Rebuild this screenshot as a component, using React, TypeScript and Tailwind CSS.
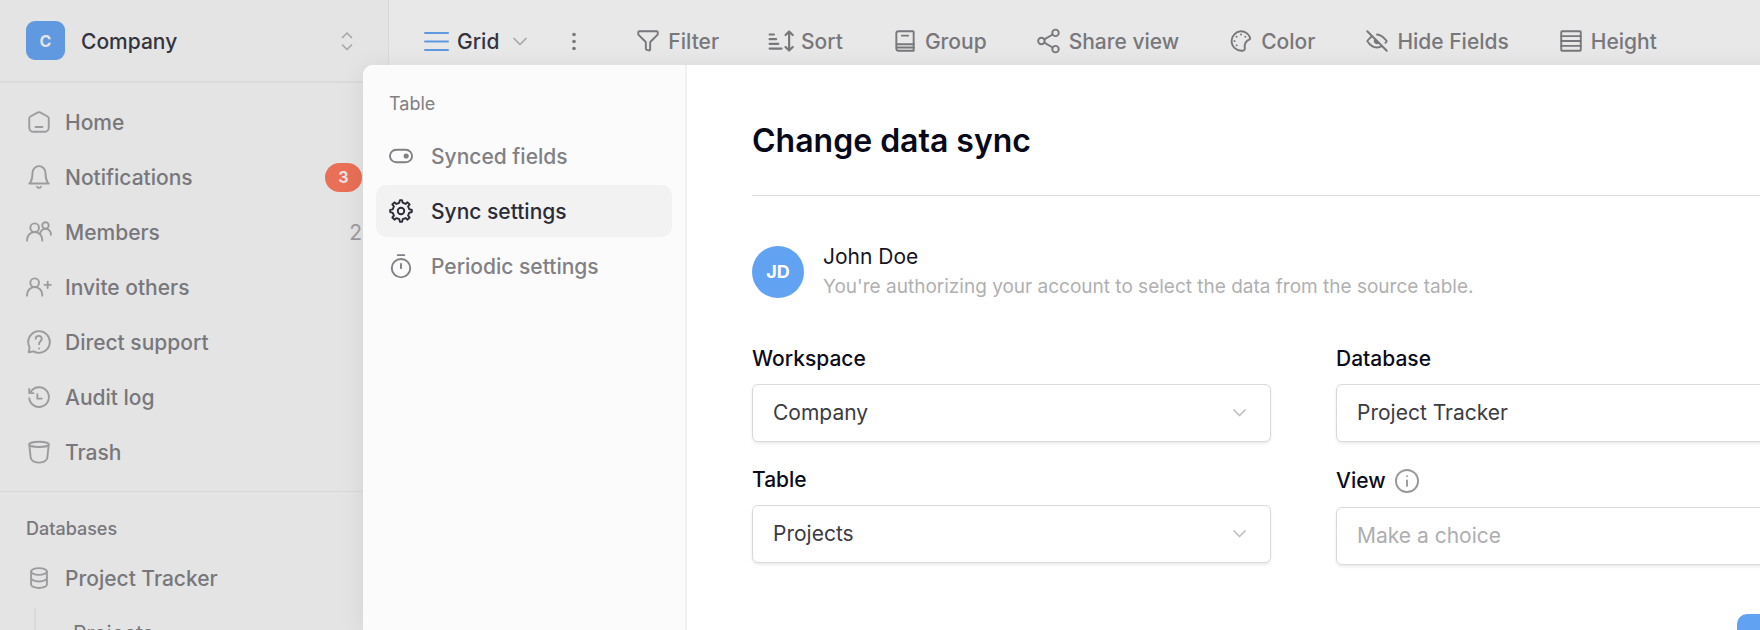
import type { ReactNode } from "react";

type IconProps = { children: ReactNode; className?: string };

function Icon({ children, className = "" }: IconProps) {
  return (
    <svg
      viewBox="0 0 24 24"
      fill="none"
      stroke="currentColor"
      strokeWidth="1.75"
      strokeLinecap="round"
      strokeLinejoin="round"
      aria-hidden="true"
      className={`size-[26px] shrink-0 ${className}`}
    >
      {children}
    </svg>
  );
}

const icons = {
  home: (
    <>
      <path d="M8.8 16.6h6.4" />
      <path d="M21 8.7v8.3a4 4 0 0 1-4 4H7a4 4 0 0 1-4-4V8.7a2 2 0 0 1 1.05-1.76l7-3.8a2 2 0 0 1 1.9 0l7 3.8A2 2 0 0 1 21 8.7z" />
    </>
  ),
  bell: (
    <>
      <path d="M18 8.4c0-1.697-.632-3.325-1.757-4.525C15.117 2.675 13.59 2 12 2c-1.591 0-3.117.674-4.243 1.875C6.632 5.075 6 6.703 6 8.4 6 15.867 3 18 3 18h18s-3-2.133-3-9.6z" />
      <path d="M13.73 21a2 2 0 0 1-3.46 0" />
    </>
  ),
  members: (
    <>
      <path d="M1 20v-1a7 7 0 0 1 14 0v1" />
      <path d="M13 14a5 5 0 0 1 10 0v.5" />
      <circle cx="8" cy="8" r="4" />
      <circle cx="18" cy="6" r="3" />
    </>
  ),
  invite: (
    <>
      <path d="M17 10h6M20 7v6" />
      <path d="M1 20v-1a7 7 0 0 1 14 0v1" />
      <circle cx="8" cy="8" r="4" />
    </>
  ),
  support: (
    <>
      <path d="M9 9c0-3.5 5.5-3.5 5.5 0 0 2.5-2.5 2-2.5 5M12 18.01l.01-.011" />
      <path d="M12 22c5.523 0 10-4.477 10-10S17.523 2 12 2 2 6.477 2 12c0 1.821.487 3.53 1.338 5L2.5 21.5l4.5-.838A9.955 9.955 0 0 0 12 22z" />
    </>
  ),
  audit: (
    <>
      <path d="M10.5 9.5v4h4" />
      <path d="M3 13.2A9.1 9.1 0 1 0 4.6 6.8L3.4 8.2" />
      <path d="M3 4.5v3.9h3.9" />
    </>
  ),
  trash: (
    <>
      <ellipse cx="12" cy="5" rx="9" ry="2.4" />
      <path d="M3 5l1.3 12.2c.2 1.6 1.1 2.8 2.6 3.4 3.2 1.5 7 1.5 10.2 0 1.5-.6 2.4-1.8 2.6-3.4L21 5" />
    </>
  ),
  database: (
    <>
      <ellipse cx="12" cy="6" rx="7.3" ry="3.1" />
      <path d="M4.7 6v12c0 1.8 3.2 3.2 7.3 3.2s7.3-1.4 7.3-3.2V6" />
      <path d="M4.7 12c0 1.8 3.2 3.2 7.3 3.2s7.3-1.4 7.3-3.2" />
    </>
  ),
  filter: (
    <path d="M4 3h16a1 1 0 0 1 1 1v1.586a1 1 0 0 1-.293.707l-6.414 6.414a1 1 0 0 0-.293.707v6.305a1 1 0 0 1-1.243.97l-2-.5a1 1 0 0 1-.757-.97v-5.805a1 1 0 0 0-.293-.707L3.293 6.293A1 1 0 0 1 3 5.586V4a1 1 0 0 1 1-1z" />
  ),
  sort: (
    <>
      <path d="M1.5 6h4M1.5 10.3h6M1.5 14.6h8M1.5 19h11" strokeWidth="2" />
      <path d="M19.5 4v16M16.2 6.5l3.3-3.3 3.3 3.3M16.2 17.5l3.3 3.3 3.3-3.3" strokeWidth="2" />
    </>
  ),
  group: (
    <>
      <path d="M4 19V5a2 2 0 0 1 2-2h13.4a.6.6 0 0 1 .6.6V21H6a2 2 0 0 1-2-2z" />
      <path d="M9 7h6M4.5 15H20M4.5 18H20" />
    </>
  ),
  share: (
    <>
      <circle cx="18" cy="4.5" r="3" />
      <circle cx="18" cy="19.5" r="3" />
      <circle cx="5" cy="12" r="3" />
      <path d="M7.6 10.5l7.8-4.5M7.6 13.5l7.8 4.5" />
    </>
  ),
  palette: (
    <>
      <path d="M20.51 9.54a1.899 1.899 0 0 1-1 1.09A7 7 0 0 0 15.37 17c.001.47.048.939.14 1.4a2.16 2.16 0 0 1-.31 1.65 1.79 1.79 0 0 1-1.21.8 9 9 0 0 1-10.62-9.13 9.05 9.05 0 0 1 8.27-8.68H12a9 9 0 0 1 8.51 6.5z" />
      <path d="M8 16.01l.01-.011M6 12.01l.01-.011M8 8.01l.01-.011M12 6.01l.01-.011M16 8.01l.01-.011" />
    </>
  ),
  hide: (
    <>
      <path d="M3 3l18 18" />
      <path d="M10.5 10.68a2 2 0 0 0 2.82 2.82z" fill="currentColor" />
      <path d="M7.36 7.56C5.68 8.74 4.28 10.42 3 12c1.89 2.99 5.13 6 9 6 1.55 0 3.04-.49 4.4-1.26M12 6c4.01 0 6.7 3.16 9 6-.35.56-.75 1.12-1.2 1.65" />
    </>
  ),
  height: (
    <>
      <rect x="3" y="3" width="18" height="18" rx=".8" />
      <path d="M3 7.5h18M3 12h18M3 16.5h18" />
    </>
  ),
  toggle: (
    <>
      <rect x="1.8" y="6.2" width="20.4" height="11.6" rx="5.8" />
      <circle cx="16.8" cy="12" r="1.5" fill="currentColor" />
    </>
  ),
  settings: (
    <>
      <circle cx="12" cy="12" r="3" />
      <path d="M19.622 10.395l-1.097-2.65L20 6l-2-2-1.735 1.483-2.707-1.113L12.935 2h-1.954l-.632 2.401-2.645 1.115L6 4 4 6l1.453 1.789-1.08 2.657L2 11v2l2.401.655L5.516 16.3 4 18l2 2 1.791-1.46 2.606 1.072L11 22h2l.604-2.387 2.651-1.098L18 20l2-2-1.484-1.75 1.098-2.652 2.386-.62V11z" />
    </>
  ),
  timer: (
    <>
      <path d="M9 2h6M12 10v4" />
      <circle cx="12" cy="14" r="8.5" />
    </>
  ),
  info: (
    <>
      <circle cx="12" cy="12" r="10.2" />
      <path d="M12 11.5v5M12 7.51l.01-.011" />
    </>
  ),
};

type IconName = keyof typeof icons;

const navItems: { label: string; icon: IconName; badge?: string; count?: string }[] = [
  { label: "Home", icon: "home" },
  { label: "Notifications", icon: "bell", badge: "3" },
  { label: "Members", icon: "members", count: "2" },
  { label: "Invite others", icon: "invite" },
  { label: "Direct support", icon: "support" },
  { label: "Audit log", icon: "audit" },
  { label: "Trash", icon: "trash" },
];

const tools: { label: string; icon: IconName }[] = [
  { label: "Filter", icon: "filter" },
  { label: "Sort", icon: "sort" },
  { label: "Group", icon: "group" },
  { label: "Share view", icon: "share" },
  { label: "Color", icon: "palette" },
  { label: "Hide Fields", icon: "hide" },
  { label: "Height", icon: "height" },
];

const settingsItems: { label: string; icon: IconName; active?: boolean }[] = [
  { label: "Synced fields", icon: "toggle" },
  { label: "Sync settings", icon: "settings", active: true },
  { label: "Periodic settings", icon: "timer" },
];

function Sidebar() {
  return (
    <aside className="flex w-[389px] shrink-0 flex-col border-r border-[#dadada] bg-[#e4e4e4] text-[#77777c]">
      <button
        type="button"
        className="flex h-[83px] shrink-0 items-center border-b-2 border-[#dbdbdb] pr-7 pl-[26px] text-left"
      >
        <span className="flex size-[39px] items-center justify-center rounded-[9px] bg-[#6099e0] text-base font-bold text-[#e4e4e4]">
          C
        </span>
        <span className="ml-4 flex-1 pt-0.5 font-medium text-[#33343e]">Company</span>
        <svg
          viewBox="0 0 26 26"
          className="size-[26px] text-[#a8a8aa]"
          fill="none"
          stroke="currentColor"
          strokeWidth="1.75"
          strokeLinecap="round"
          strokeLinejoin="round"
          aria-hidden="true"
        >
          <path d="M8.5 9.5L13 5l4.5 4.5M8.5 17l4.5 4.5L17.5 17" />
        </svg>
      </button>
      <nav className="flex flex-col gap-[3px] border-b border-[#d9d9d9] py-[13px]">
        {navItems.map((item) => (
          <a key={item.label} href="#" className="flex h-[52px] items-center gap-[13px] px-[26px]">
            <Icon className="text-[#9c9c9f]">{icons[item.icon]}</Icon>
            <span className="flex-1 pt-0.5 font-medium">{item.label}</span>
            {item.badge && (
              <span className="flex h-[29px] w-[37px] items-center justify-center rounded-full bg-[#e96f57] text-base font-bold text-[#e8e4e4]">
                {item.badge}
              </span>
            )}
            {item.count && <span className="pt-0.5 text-[#9c9c9f]">{item.count}</span>}
          </a>
        ))}
      </nav>
      <h2 className="px-[26px] pt-[25px] text-lg leading-6 font-medium">Databases</h2>
      <a href="#" className="mt-[11px] flex h-[52px] shrink-0 items-center gap-[13px] px-[26px]">
        <Icon className="text-[#9c9c9f]">{icons.database}</Icon>
        <span className="pt-0.5 font-medium">Project Tracker</span>
      </a>
      <ul className="mt-1 ml-[34px] border-l-2 border-[#d9d9d9]">
        <li>
          <a href="#" className="flex h-[52px] items-center pl-[37px]">
            Projects
          </a>
        </li>
      </ul>
    </aside>
  );
}

function Toolbar() {
  return (
    <header className="flex h-[81px] items-center pl-[34px] font-medium whitespace-nowrap text-[#77777c]">
      <button type="button" className="flex items-center text-[#33343e]">
        <svg
          viewBox="0 0 26 26"
          className="size-[26px] shrink-0 text-[#6099e0]"
          fill="none"
          stroke="currentColor"
          strokeWidth="2"
          strokeLinecap="round"
          aria-hidden="true"
        >
          <path d="M2 5h23M2 13.5h23M2 22h23" />
        </svg>
        <span className="ml-2 pt-0.5">Grid</span>
        <svg
          viewBox="0 0 26 26"
          className="ml-2 size-[26px] text-[#a8a8aa]"
          fill="none"
          stroke="currentColor"
          strokeWidth="1.75"
          strokeLinecap="round"
          strokeLinejoin="round"
          aria-hidden="true"
        >
          <path d="M7 10.5l6 6 6-6" />
        </svg>
      </button>
      <button type="button" aria-label="View options" className="ml-7">
        <svg viewBox="0 0 26 26" className="size-[26px]" fill="currentColor" aria-hidden="true">
          <circle cx="13" cy="6.500" r="1.800" />
          <circle cx="13" cy="13.500" r="1.800" />
          <circle cx="13" cy="20.500" r="1.800" />
        </svg>
      </button>
      <div className="ml-12 flex gap-[49px]">
        {tools.map((tool) => (
          <button key={tool.label} type="button" className="flex items-center gap-[7px]">
            <Icon>{icons[tool.icon]}</Icon>
            <span className="pt-0.5">{tool.label}</span>
          </button>
        ))}
      </div>
    </header>
  );
}

type FieldProps = { id: string; label: string; value: string; placeholder?: boolean; info?: boolean };

function SelectField({ id, label, value, placeholder, info }: FieldProps) {
  return (
    <div className="flex flex-col gap-[13px]">
      <div className="flex items-center gap-2">
        <label htmlFor={id} className="leading-6 font-medium text-[#0b0c1b]">
          {label}
        </label>
        {info && <Icon className="text-[#98989c]">{icons.info}</Icon>}
      </div>
      <div className="relative">
        <select
          id={id}
          defaultValue={value}
          className={`h-[58px] w-full appearance-none rounded-md border border-[#d9d9dc] bg-white px-5 shadow-[0_2px_3px_rgba(0,0,0,0.08)] ${
            placeholder ? "text-[#aeaeb1]" : "text-[#3b3b44]"
          }`}
        >
          <option>{value}</option>
        </select>
        <svg
          viewBox="0 0 26 26"
          className="pointer-events-none absolute top-4 right-[18px] size-[26px] text-[#bfbfc2]"
          fill="none"
          stroke="currentColor"
          strokeWidth="1.75"
          strokeLinecap="round"
          strokeLinejoin="round"
          aria-hidden="true"
        >
          <path d="M7 10l5.5 5.5L18 10" />
        </svg>
      </div>
    </div>
  );
}

function DataSyncDialog() {
  return (
    <div
      role="dialog"
      aria-labelledby="dialog-title"
      className="absolute top-[65px] left-[363px] flex h-[calc(100vh-65px)] w-[1557px] overflow-hidden rounded-tl-[10px] bg-white shadow-[0_3px_26px_rgba(0,0,0,0.08)]"
    >
      <nav className="w-[324px] shrink-0 border-r-2 border-[#f0f0f0] bg-[#fbfbfb] px-[13px] pt-[27px] text-[#808085]">
        <h2 className="px-[13px] text-lg leading-6">Table</h2>
        <ul className="mt-[14px] flex flex-col gap-[3px]">
          {settingsItems.map((item) => (
            <li key={item.label}>
              <a
                href="#"
                className={`flex h-[52px] items-center gap-[17px] rounded-[10px] px-3 font-medium ${
                  item.active ? "bg-[#f2f2f2] text-[#2b2c37]" : ""
                }`}
              >
                <Icon>{icons[item.icon]}</Icon>
                <span className="pt-0.5">{item.label}</span>
              </a>
            </li>
          ))}
        </ul>
      </nav>
      <main className="flex flex-1 flex-col px-[65px] pt-14">
        <h1
          id="dialog-title"
          className="border-b border-[#dcdcde] pb-[34px] text-[32px] leading-10 font-semibold text-[#070819]"
        >
          Change data sync
        </h1>
        <div className="mt-[46px] flex items-center gap-[19px]">
          <span className="flex size-[52px] items-center justify-center rounded-full bg-[#62a2f2] text-lg font-bold text-white">
            JD
          </span>
          <div>
            <p className="leading-[30px] text-[#14151f]">John Doe</p>
            <p className="text-[19px] leading-[30px] text-[#b0b0b2]">
              You're authorizing your account to select the data from the source table.
            </p>
          </div>
        </div>
        <form className="mt-[45px] grid grid-cols-2 gap-x-[65px] gap-y-[26px]">
          <SelectField id="workspace" label="Workspace" value="Company" />
          <SelectField id="database" label="Database" value="Project Tracker" />
          <SelectField id="table" label="Table" value="Projects" />
          <SelectField id="view" label="View" value="Make a choice" placeholder info />
        </form>
        <button
          type="button"
          aria-label="Save"
          className="mt-[49px] h-[58px] w-[118px] shrink-0 self-end rounded-[10px] bg-[#62a2f2]"
        />
      </main>
    </div>
  );
}

export default function App() {
  return (
    <div className="relative flex h-screen overflow-hidden bg-[#e8e8e8] font-['Inter',sans-serif] text-[21px] leading-[30px] [font-optical-sizing:none]">
      <Sidebar />
      <div className="min-w-0 flex-1">
        <Toolbar />
      </div>
      <DataSyncDialog />
    </div>
  );
}
